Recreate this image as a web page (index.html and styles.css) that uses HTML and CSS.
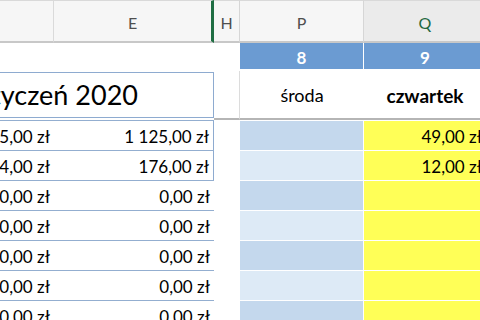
FILE: index.html
```html
<!DOCTYPE html>
<html lang="pl">
<head>
<meta charset="utf-8">
<title>Arkusz – Styczeń 2020</title>
<link rel="stylesheet" href="styles.css">
</head>
<body>
<div class="sheet">
  <div class="hd hd-d"></div>
  <div class="hd hd-e">E</div>
  <div class="hd hd-h">H</div>
  <div class="hd hd-p">P</div>
  <div class="hd hd-q">Q</div>

  <div class="blank span3"></div>
  <div class="num num-p">8</div>
  <div class="num">9</div>

  <div class="title"><span>Styczeń 2020</span></div>
  <div class="day day-h"></div>
  <div class="day">środa</div>
  <div class="day day-bold">czwartek</div>

  <div class="val boxed">5,00 zł</div>
  <div class="val boxed boxed-r">1 125,00 zł</div>
  <div class="gap"></div>
  <div class="cell p-dark"></div>
  <div class="cell q">49,00 zł</div>

  <div class="val boxed">4,00 zł</div>
  <div class="val boxed boxed-r">176,00 zł</div>
  <div class="gap"></div>
  <div class="cell p-light"></div>
  <div class="cell q">12,00 zł</div>

  <div class="val">0,00 zł</div>
  <div class="val">0,00 zł</div>
  <div class="gap"></div>
  <div class="cell p-dark"></div>
  <div class="cell q"></div>

  <div class="val">0,00 zł</div>
  <div class="val">0,00 zł</div>
  <div class="gap"></div>
  <div class="cell p-light"></div>
  <div class="cell q"></div>

  <div class="val">0,00 zł</div>
  <div class="val">0,00 zł</div>
  <div class="gap"></div>
  <div class="cell p-dark"></div>
  <div class="cell q"></div>

  <div class="val">0,00 zł</div>
  <div class="val">0,00 zł</div>
  <div class="gap"></div>
  <div class="cell p-light"></div>
  <div class="cell q"></div>

  <div class="val">0,00 zł</div>
  <div class="val">0,00 zł</div>
  <div class="gap"></div>
  <div class="cell p-dark"></div>
  <div class="cell q"></div>
</div>
</body>
</html>
```
FILE: styles.css
```css
html, body {
  margin: 0;
  padding: 0;
  background: #ffffff;
}
body {
  width: 480px;
  height: 320px;
  overflow: hidden;
  font-family: Lato, "Noto Sans", sans-serif;
  color: #000000;
}
.sheet {
  margin-left: -30px;
  display: grid;
  grid-template-columns: 84px 160px 26px 124px 122px;
  grid-template-rows: 43px 28px 49px repeat(7, 30px);
}

/* column headers */
.hd {
  background: #f6f6f6;
  border-top: 1px solid #d9d9d9;
  border-bottom: 2px solid #c8c8c8;
  display: flex;
  align-items: center;
  justify-content: center;
  padding-top: 3px;
  box-sizing: border-box;
  font-size: 16px;
  color: #4f4f4f;
}
.hd-d { border-right: 1px solid #dadada; }
.hd-e { border-right: 3px solid #1f6e43; }
.hd-h { border-right: 1px solid #d6d6d6; }
.hd-p { border-right: 1px solid #d6d6d6; }
.hd-q { background: #ebebeb; color: #22683f; }

/* day number row */
.span3 { grid-column: span 3; }
.num {
  background: #6b9bd2;
  border-bottom: 2px solid #ffffff;
  color: #ffffff;
  font-weight: 700;
  font-size: 17px;
  display: flex;
  align-items: center;
  justify-content: center;
  padding-top: 2px;
  box-sizing: border-box;
}
.num-p { border-right: 1px solid #ffffff; }

/* title row */
.title {
  grid-column: span 2;
  margin: 1px 0 2px 0;
  border: 1px solid #8eabd0;
  display: flex;
  align-items: center;
  padding-left: 6px;
  font-size: 27px;
  line-height: 34px;
  color: #000000;
}
.day {
  border-bottom: 2px solid #b5b5b5;
  display: flex;
  align-items: center;
  justify-content: center;
  padding-top: 1px;
  font-size: 18px;
  color: #000000;
}
.day-h { border-right: 1px solid #dcdcdc; }
.day-bold { font-weight: 700; font-size: 19px; }

/* data rows */
.val {
  border-top: 1px solid #93aed0;
  display: flex;
  align-items: flex-end;
  justify-content: flex-end;
  padding: 0 4px 3px 0;
  font-size: 17px;
  line-height: 20px;
  color: #000000;
}
.boxed-r { border-right: 1px solid #8eabd0; }
.cell {
  border-top: 1px solid #ffffff;
  display: flex;
  align-items: flex-end;
  justify-content: flex-end;
  padding: 0 4px 3px 0;
  font-size: 17px;
  line-height: 20px;
  color: #000000;
}
.p-dark { background: #c4d8ed; border-right: 1px solid #ffffff; }
.p-light { background: #ddeaf6; border-right: 1px solid #ffffff; }
.q { background: #ffff57; }
```
